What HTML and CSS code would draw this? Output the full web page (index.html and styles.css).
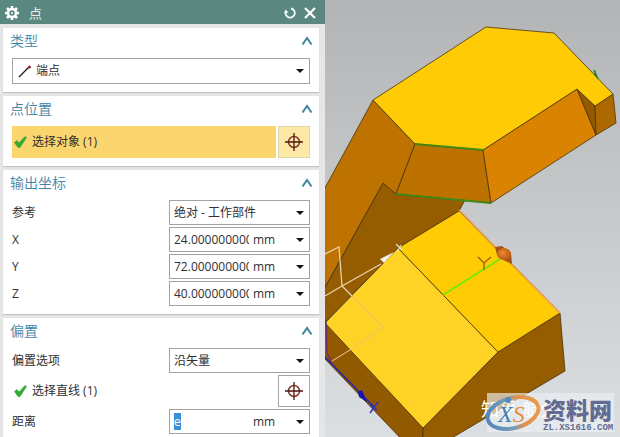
FILE: index.html
```html
<!DOCTYPE html>
<html lang="zh-CN">
<head>
<meta charset="utf-8">
<meta name="viewport" content="width=device-width, initial-scale=1">
<title>点</title>
<link rel="stylesheet" href="styles.css">
</head>
<body>
<svg class="defs" aria-hidden="true">
  <symbol id="chevron" viewBox="0 0 12 10"><path d="M1.500 8.500 6 2l4.500 6.500" fill="none" stroke="#3d86a0" stroke-width="2"/></symbol>
  <symbol id="caret" viewBox="0 0 8 4"><path d="M0 0h8L4 4z" fill="#151515"/></symbol>
  <symbol id="target" viewBox="0 0 20 20"><circle cx="10" cy="10" r="5.500" fill="none" stroke="#853c2c" stroke-width="1.500"/><path d="M10 1v18M1 10h18" stroke="#50150f" stroke-width="1.300"/></symbol>
  <symbol id="check" viewBox="0 0 13 12"><path d="M.5 6.500 3 4.500l2 2.500L11 .5l1.500 1L6 11.500H4z" fill="#31ad35" stroke="#249329" stroke-width=".5"/></symbol>
</svg>
<div class="app">
  <form class="dialog">
    <header class="titlebar">
      <svg class="gear" viewBox="0 0 14 14" aria-hidden="true"><g stroke="#fff" fill="none"><circle cx="7" cy="7" r="4" stroke-width="2.500"/><path d="M7 0v2.500M7 11.500V14M0 7h2.500M11.500 7H14M2 2l2 2M10 10l2 2M12 2l-2 2M4 10l-2 2" stroke-width="2.500"/></g><circle cx="7" cy="7" r="1" fill="#fff"/></svg>
      <h1>点</h1>
      <button type="button" class="tool" aria-label="重置"><svg viewBox="0 0 12 12"><path d="M7 1.500A4.600 4.600 0 1 1 1.700 5" fill="none" stroke="#effafa" stroke-width="1.800"/><path d="M0 6.500 1.500 2.500 4.500 5.500z" fill="#effafa"/></svg></button>
      <button type="button" class="tool" aria-label="关闭"><svg viewBox="0 0 12 12"><path d="m1 1 10 10M11 1 1 11" stroke="#fff" stroke-width="2.200"/></svg></button>
    </header>

    <section class="card">
      <button type="button" class="heading"><span>类型</span><svg><use href="#chevron"/></svg></button>
      <div class="picker tall">
        <svg class="line-icon" viewBox="0 0 14 13" aria-hidden="true"><path d="M1 12 11 2" stroke="#27151a" stroke-width="1.200"/><circle cx="11.500" cy="2" r="1.500" fill="#9b2a35"/></svg>
        <select aria-label="类型"><option>端点</option></select>
        <svg class="caret"><use href="#caret"/></svg>
      </div>
    </section>

    <section class="card">
      <button type="button" class="heading"><span>点位置</span><svg><use href="#chevron"/></svg></button>
      <div class="pick-row active">
        <div class="pick-label"><svg class="check"><use href="#check"/></svg><span>选择对象 (1)</span></div>
        <button type="button" class="target" aria-label="选择对象"><svg><use href="#target"/></svg></button>
      </div>
    </section>

    <section class="card">
      <button type="button" class="heading"><span>输出坐标</span><svg><use href="#chevron"/></svg></button>
      <div class="fields">
        <div class="field"><label for="ref">参考</label><div class="picker"><select id="ref"><option>绝对 - 工作部件</option></select><svg class="caret"><use href="#caret"/></svg></div></div>
        <div class="field"><label for="x">X</label><div class="picker"><input id="x" type="text" value="24.000000000"><select class="unit" aria-label="X 单位"><option>mm</option></select><svg class="caret"><use href="#caret"/></svg></div></div>
        <div class="field"><label for="y">Y</label><div class="picker"><input id="y" type="text" value="72.000000000"><select class="unit" aria-label="Y 单位"><option>mm</option></select><svg class="caret"><use href="#caret"/></svg></div></div>
        <div class="field"><label for="z">Z</label><div class="picker"><input id="z" type="text" value="40.000000000"><select class="unit" aria-label="Z 单位"><option>mm</option></select><svg class="caret"><use href="#caret"/></svg></div></div>
      </div>
    </section>

    <section class="card last">
      <button type="button" class="heading"><span>偏置</span><svg><use href="#chevron"/></svg></button>
      <div class="fields">
        <div class="field"><label for="offset">偏置选项</label><div class="picker"><select id="offset"><option>沿矢量</option></select><svg class="caret"><use href="#caret"/></svg></div></div>
        <div class="pick-row">
          <div class="pick-label"><svg class="check"><use href="#check"/></svg><span>选择直线 (1)</span></div>
          <button type="button" class="target" aria-label="选择直线"><svg><use href="#target"/></svg></button>
        </div>
        <div class="field"><label for="distance">距离</label><div class="picker"><input id="distance" type="text" value="e"><select class="unit" aria-label="距离单位"><option>mm</option></select><svg class="caret"><use href="#caret"/></svg></div></div>
      </div>
    </section>
  </form>

  <main class="viewport">
    <svg class="scene" viewBox="325 0 295 437" preserveAspectRatio="xMinYMin slice" role="img" aria-label="三维模型">
      <defs>
        <linearGradient id="logo-ring" x1="0" x2="1"><stop offset="0" stop-color="#5588bd"/><stop offset=".45" stop-color="#789cb8"/><stop offset=".65" stop-color="#df914d"/><stop offset="1" stop-color="#e99b49"/></linearGradient>
        <radialGradient id="cone" cx=".4" cy=".4"><stop offset="0" stop-color="#f08a2c"/><stop offset="1" stop-color="#c2611a"/></radialGradient>
      </defs>
      <g stroke="#49330c" stroke-width=".8" stroke-linejoin="round">
        <path fill="#955c00" d="M383 183 396 194 465 200 459 211 398 248 325 322 320 297z"/>
        <path fill="#be7300" d="M373 100 415 144 396 194 383 183 325 287 320 197z"/>
        <path fill="#bd7200" d="M415 144 483 150 491 203 396 194z"/>
        <path fill="#d98300" d="M483 150 577 89 596 135 491 203z"/>
        <path fill="#955900" d="m577 89 18 17 1 29z"/>
        <path fill="#ad6900" d="m595 106 18-12 3 29-20 12z"/>
        <path fill="#ffcb05" d="M486 27 554 33 613 94 595 106 577 89 483 150 415 144 373 100z"/>
        <path fill="#915900" d="M320 316 423 428V445H407L325 359z"/>
        <path fill="#955c00" d="M560 313 565 371 440 445H423V428L498 352z"/>
        <path fill="#ffd326" d="M398 248 498 352 423 428 325 323z"/>
        <path fill="#ffcb05" d="M459 211 560 313 498 352 398 248z"/>
      </g>
      <g fill="none">
        <path d="m415 144 68 6M396 194l95 9" stroke="#438714" stroke-width="2"/>
        <path d="m594 70 4 9m-3-8v5" stroke="#287e28" stroke-width="1.500"/>
        <path d="m459 210 101 103" stroke="#e79c5e" stroke-width="1.500"/>
        <path d="m325 254 14-7 3 39-17 10m17-10 39-22m-39 22 10 10" stroke="#ead1ae" stroke-width="1.300"/>
        <path d="m352 296 31 31-33 23" stroke="#ecc75c" stroke-width="1.300"/>
        <path d="m350 350-18 11" stroke="#edcba4"/>
        <path d="m326 322 1 31 4 8" stroke="#733068" stroke-width="1.500"/>
        <path d="m325 357 49 50" stroke="#2520b4" stroke-width="1.300"/>
        <path d="m443 295 57-36" stroke="#74e900" stroke-width="2"/>
        <path d="m396 244 6 6m-1-5-4 7" stroke="#e7dcd1" stroke-width="1.200"/>
        <path d="m370 405 7 5m1-8-8 11" stroke="#3032c3" stroke-width="1.500"/>
        <path d="m478 257 6 6 7-6m-7 6v7" stroke="#a16b00" stroke-width="1.500"/>
      </g>
      <path fill="#f4f2e8" d="m380 259 14-7-10 11z"/>
      <path fill="#1816a8" d="m358 392 4-2 5 12-8-5z"/>
      <path fill="#a45116" d="m495 247 7-1 9 7 1 11-9-4-6-5z"/>
      <ellipse cx="504" cy="254" rx="7" ry="6" fill="url(#cone)"/>
      <g class="watermark">
        <path d="M487 393H614V432H487z" fill="#edf0f3" opacity=".65"/>
        <text class="source" x="481" y="416">知乎 航分</text>
        <ellipse cx="513" cy="413" rx="26" ry="15" transform="rotate(-15 513 413)" fill="none" stroke="url(#logo-ring)" stroke-width="4"/>
        <text class="monogram" x="498" y="422"><tspan class="mark-x">X</tspan><tspan class="mark-s">S</tspan></text>
        <circle cx="508" cy="400" r="3" fill="#5488b8"/>
        <text class="site" x="543" y="419">资料网</text>
        <text class="domain" x="543" y="430">ZL.XS1616.COM</text>
      </g>
    </svg>
  </main>
</div>
<script src="script.js"></script>
</body>
</html>
```

FILE: styles.css
```css
* { box-sizing: border-box; }
body {
  margin: 0;
  overflow: hidden;
  color: #303030;
  font: 12px/16px "Open Sans", "Noto Sans CJK SC", sans-serif;
}
button, input, select { font: inherit; color: inherit; }
button { padding: 0; border: 0; background: none; }
svg { display: block; flex: none; }
.defs { position: absolute; width: 0; height: 0; }
.app {
  display: grid;
  grid-template: 100% / 325px 1fr;
  height: 100vh;
  overflow: hidden;
  background: linear-gradient(#b2b4b5, #dcdfe2);
}
.dialog {
  display: flex;
  flex-direction: column;
  gap: 4px;
  min-height: 0;
  overflow: hidden;
  background: #e6e6e7;
}
.titlebar {
  display: flex;
  flex: none;
  align-items: center;
  gap: 8px;
  height: 24px;
  padding: 2px 9px 0 5px;
  background: #5a8880;
  color: #fff;
}
.gear { width: 14px; height: 14px; }
h1 { flex: 1; margin: 0 2px; font-size: 13px; line-height: 20px; font-weight: 350; }
.tool svg { width: 12px; height: 12px; }
.card {
  flex: none;
  margin: 0 6px 0 3px;
  padding: 0 9px 8px;
  background: #fff;
  box-shadow: 0 1px 1px #c3c3c3;
}
.last { flex: 1 0 auto; padding-bottom: 2px; }
.heading {
  display: flex;
  align-items: center;
  justify-content: space-between;
  width: 100%;
  height: 30px;
  padding: 0 0 4px;
  color: #3b86ab;
  font-size: 14px;
  font-weight: 350;
  line-height: 20px;
}
.heading span { margin-left: -2px; }
.heading svg { width: 12px; height: 10px; margin-right: -3px; }
.picker {
  position: relative;
  display: flex;
  align-items: center;
  width: 141px;
  height: 25px;
  border: 1px solid #a3a3a3;
  background: #fff;
}
.picker.tall { width: 298px; height: 26px; padding-left: 5px; }
.line-icon { width: 14px; height: 13px; }
select {
  flex: 1;
  min-width: 0;
  height: 100%;
  padding: 0 20px 0 4px;
  border: 0;
  outline: 0;
  appearance: none;
  background: transparent;
}
.caret {
  position: absolute;
  right: 5px;
  width: 8px;
  height: 4px;
  pointer-events: none;
}
input {
  width: 79px;
  height: 21px;
  padding: 0 0 0 4px;
  border: 0;
  outline: 0;
  background: transparent;
}
input::selection { background: #3b8fd4; color: #fff; }
.fields { display: grid; gap: 2px; }
.field { display: flex; align-items: center; justify-content: space-between; width: 298px; }
.pick-row { display: flex; gap: 2px; width: 298px; height: 32px; }
.pick-label { display: flex; flex: 1; align-items: center; gap: 5px; padding-left: 2px; }
.check { width: 13px; height: 12px; }
.target {
  display: grid;
  place-items: center;
  width: 32px;
  border: 1px solid #a5a5a5;
}
.target svg { width: 20px; height: 20px; }
.active .pick-label { background: #fbd56d; }
.active .target { background: #fce9a7; border-color: #ddd8ab; }
.viewport { min-width: 0; overflow: hidden; }
.scene { width: 100%; height: 100%; }
.watermark { font-family: "Liberation Sans", "Noto Sans CJK SC", sans-serif; }
.source { fill: #fff; font-size: 18px; }
.monogram { font: italic 24px "Liberation Serif", serif; }
.mark-x { fill: #427fb9; }
.mark-s { fill: #e88e40; }
.site { fill: #626b92; font-size: 23px; font-weight: 900; }
.domain { fill: #626b92; font: bold 9px "Liberation Mono", monospace; }
```

FILE: script.js
```js
const distance = document.getElementById("distance");
distance.focus({ preventScroll: true });
distance.select();
```
